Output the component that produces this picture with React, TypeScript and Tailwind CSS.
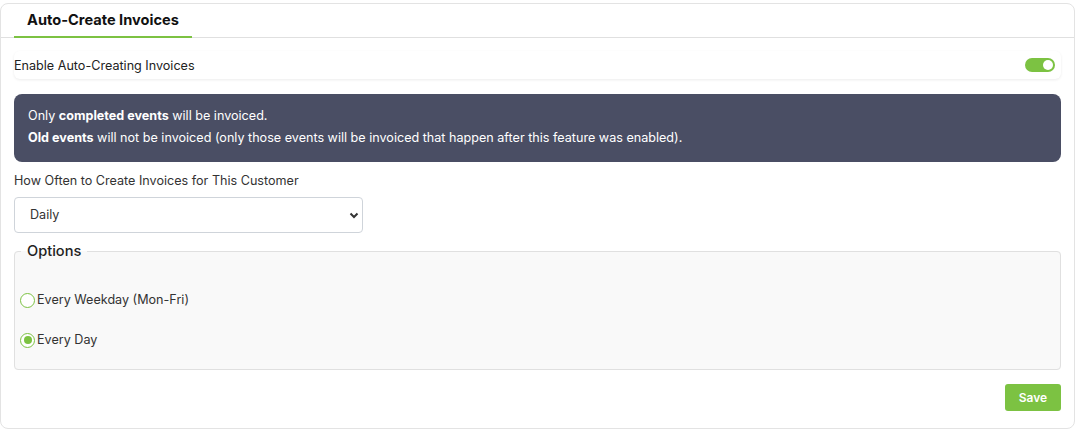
import React from "react";

export default function App() {
  return (
    <div className="w-[1079px] h-[432px] bg-white pt-[3px] pl-0" style={{ fontFamily: "Inter, 'Noto Sans', sans-serif" }}>
      <div className="w-[1075px] h-[426px] border border-[#e3e3e3] rounded-[8px] bg-white flex flex-col">
        <div className="h-[34px] border-b border-[#e0e0e0] flex items-end pl-[13px]">
          <div className="h-full flex items-center border-b-[2px] border-[#7cc242] mb-[-1px] w-[178px] justify-center whitespace-nowrap">
            <span className="text-[14.6px] font-bold text-[#111] pt-[1px]">Auto-Create Invoices</span>
          </div>
        </div>
        <div className="px-[13px] flex flex-col">
          <div className="mt-[13px] h-[28px] rounded-[6px] bg-white shadow-[0_1px_3px_rgba(0,0,0,0.08)] flex items-center justify-between pr-[6px]">
            <span className="text-[12.6px] text-[#222] pt-[2px]">Enable Auto-Creating Invoices</span>
            <div className="w-[30px] h-[14px] rounded-full bg-[#7cc242] flex items-center justify-end pr-[2px]">
              <div className="w-[10px] h-[10px] rounded-full bg-white" />
            </div>
          </div>
          <div className="mt-[15px] h-[68px] rounded-[8px] bg-[#4a4e64] px-[14px] py-[11px] text-[12.6px] leading-[22px] text-white">
            <div>Only <b>completed events</b> will be invoiced.</div>
            <div><b>Old events</b> will not be invoiced (only those events will be invoiced that happen after this feature was enabled).</div>
          </div>
          <div className="mt-[10px] text-[12.6px] leading-[18px] text-[#333]">How Often to Create Invoices for This Customer</div>
          <div className="mt-[7px] w-[349px] h-[36px] border border-[#cfd4da] rounded-[4px] flex items-center justify-between pl-[15px] pr-[3px]">
            <span className="text-[12.6px] text-[#333]">Daily</span>
            <svg width="10" height="8" viewBox="0 0 10 8"><path d="M1.5 2.5 L5 6 L8.5 2.5" fill="none" stroke="#333" strokeWidth="2" /></svg>
          </div>
          <fieldset className="mt-[9px] h-[128px] border border-[#e0e0e0] rounded-[4px] bg-[#f9f9f9] px-[5px] pb-0">
            <legend className="ml-[1px] px-[6px] text-[14.6px] font-medium text-[#222] leading-[18px]">Options</legend>
            <div className="mt-[33px] flex flex-col gap-[26px]">
              <label className="flex items-center h-[14px]">
                <span className="w-[15px] h-[15px] rounded-full border border-[#7cc242] bg-white" />
                <span className="ml-[2px] text-[12.6px] text-[#333]">Every Weekday (Mon-Fri)</span>
              </label>
              <label className="flex items-center h-[14px]">
                <span className="w-[15px] h-[15px] rounded-full border border-[#7cc242] bg-white flex items-center justify-center">
                  <span className="w-[8px] h-[8px] rounded-full bg-[#7cc242]" />
                </span>
                <span className="ml-[2px] text-[12.6px] text-[#333]">Every Day</span>
              </label>
            </div>
          </fieldset>
          <div className="mt-[14px] flex justify-end">
            <button className="w-[56px] h-[27px] rounded-[3px] bg-[#7cc242] text-white text-[12px] font-semibold">Save</button>
          </div>
        </div>
      </div>
    </div>
  );
}
